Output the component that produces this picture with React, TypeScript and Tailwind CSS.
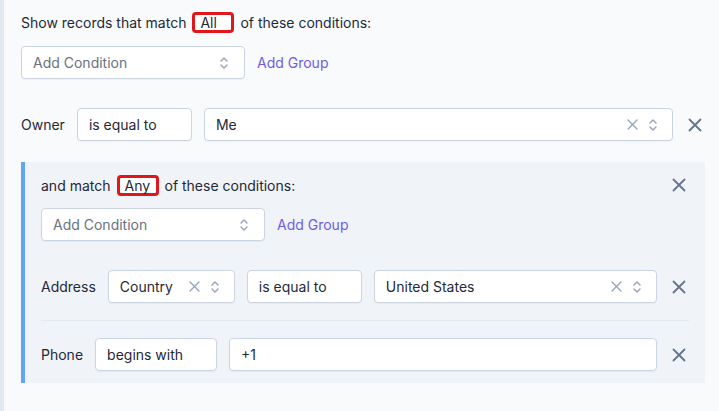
import React from 'react';

const font = { fontFamily: 'Inter, "Noto Sans", sans-serif' };

const UpDown = () => (
  <svg width="10" height="14" viewBox="0 0 10 14" fill="none" stroke="#94a3b8" strokeWidth="1.4" strokeLinecap="round" strokeLinejoin="round">
    <path d="M2 5l3-3 3 3" />
    <path d="M2 9l3 3 3-3" />
  </svg>
);

const ClearX = () => (
  <svg width="11" height="11" viewBox="0 0 11 11" fill="none" stroke="#94a3b8" strokeWidth="1.3" strokeLinecap="round">
    <path d="M1 1l9 9M10 1l-9 9" />
  </svg>
);

const RemoveButton = () => (
  <button type="button" className="flex w-5 h-5 shrink-0 items-center justify-center">
    <svg width="14" height="14" viewBox="0 0 14 14" fill="none" stroke="#64748b" strokeWidth="1.8" strokeLinecap="round">
      <path d="M1.5 1.5l11 11M12.5 1.5l-11 11" />
    </svg>
  </button>
);

interface BoxProps {
  text: string;
  className?: string;
  clearable?: boolean;
  select?: boolean;
  placeholder?: boolean;
}

// Single input / select box
const Box: React.FC<BoxProps> = ({ text, className = '', clearable, select, placeholder }) => (
  <div
    className={`flex h-[33px] items-center rounded-[4px] border border-[#cbd5e1] bg-white pl-[11px] pr-[14px] shadow-[0_1px_1px_rgba(15,23,42,0.04)] ${className}`}
  >
    <span className={`flex-1 truncate text-[14px] ${placeholder ? 'text-[#6b7280]' : 'text-[#1f2937]'}`}>{text}</span>
    {clearable && (
      <span className="mr-[10px] flex items-center">
        <ClearX />
      </span>
    )}
    {select && <UpDown />}
  </div>
);

const Highlight: React.FC<{ text: string; className?: string }> = ({ text, className = '' }) => (
  <span
    className={`mx-[6px] inline-flex h-[21px] items-center rounded-[4px] border-[3px] border-[#e0161b] bg-white pl-[5px] text-[14px] text-[#1f2937] ${className}`}
  >
    {text}
  </span>
);

const AddRow: React.FC = () => (
  <div className="flex items-center gap-3">
    <Box text="Add Condition" placeholder select className="w-[224px] pr-[15px]" />
    <a className="text-[14px] text-[#6e5ce6]" href="#">
      Add Group
    </a>
  </div>
);

export default function App() {
  return (
    <div className="flex h-[411px] w-[719px] bg-[#f8fafc]" style={font}>
      <div className="w-1 shrink-0 bg-[#e2e8f0]" />
      <div className="flex w-[701px] flex-col pl-[17px] pt-[12px]">
        {/* header */}
        <div className="flex h-[20px] items-center text-[14px] text-[#1f2937]">
          <span>Show records that match</span>
          <Highlight text="All" className="w-[42px]" />
          <span>of these conditions:</span>
        </div>

        <div className="mt-[14px]">
          <AddRow />
        </div>

        {/* Owner row */}
        <div className="mt-[29px] flex items-center gap-3">
          <span className="text-[14px] text-[#1f2937]">Owner</span>
          <Box text="is equal to" className="w-[115px]" />
          <Box text="Me" clearable select className="flex-1" />
          <RemoveButton />
        </div>

        {/* nested group */}
        <div className="mt-[21px] border-l-4 border-[#60a5fa] bg-[#f0f3f8] pb-[12px] pl-4 pr-4 pt-[13px]">
          <div className="flex h-[20px] items-center text-[14px] text-[#1f2937]">
            <span>and match</span>
            <Highlight text="Any" className="w-[42px]" />
            <span className="flex-1">of these conditions:</span>
            <RemoveButton />
          </div>

          <div className="mt-[13px]">
            <AddRow />
          </div>

          <div className="mt-[29px] flex items-center gap-3 border-b border-[#e2e8f0] pb-[17px]">
            <span className="text-[14px] text-[#1f2937]">Address</span>
            <Box text="Country" clearable select className="w-[127px]" />
            <Box text="is equal to" className="w-[115px]" />
            <Box text="United States" clearable select className="flex-1" />
            <RemoveButton />
          </div>

          <div className="mt-[17px] flex items-center gap-3">
            <span className="text-[14px] text-[#1f2937]">Phone</span>
            <Box text="begins with" className="w-[122px]" />
            <Box text="+1" className="flex-1" />
            <RemoveButton />
          </div>
        </div>
      </div>
    </div>
  );
}
